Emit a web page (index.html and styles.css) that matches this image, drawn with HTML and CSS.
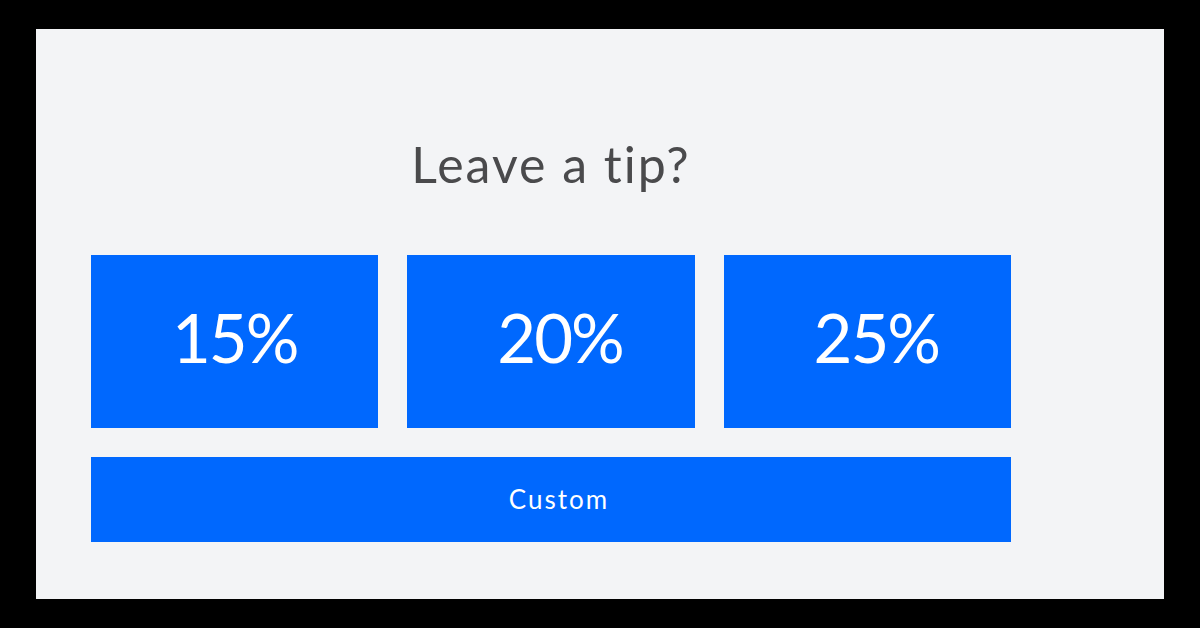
FILE: index.html
```html
<!DOCTYPE html>
<html lang="en">
<head>
    <meta charset="UTF-8">
    <meta name="viewport" content="width=device-width, initial-scale=1.0">
    <title>Leave a tip?</title>
    <link rel="stylesheet" href="styles.css">
</head>
<body>
    <div class="panel">
        <div class="tip">
            <h1 class="tip-title">Leave a tip?</h1>
            <div class="tip-options">
                <button class="tip-btn">15%</button>
                <button class="tip-btn tip-btn-offset">20%</button>
                <button class="tip-btn tip-btn-offset">25%</button>
            </div>
            <button class="tip-btn tip-custom">Custom</button>
        </div>
    </div>
</body>
</html>
```
FILE: styles.css
```css
html, body{
    margin: 0;
    background: #000;
}

body{
    padding: 29px 36px;
    font-family: Lato, "Open Sans", sans-serif;
}

.panel{
    background: #f3f4f6;
    height: 570px;
    padding: 105px 153px 0 55px;
    box-sizing: border-box;
}

.tip-title{
    margin: 0 0 61px;
    font-size: 50px;
    line-height: 60px;
    font-weight: 400;
    letter-spacing: 2px;
    color: #4a4a4c;
    text-align: center;
}

.tip-options{
    display: grid;
    grid-template-columns: repeat(3, 1fr);
    gap: 29px;
    margin-bottom: 29px;
}

.tip-btn{
    display: flex;
    align-items: center;
    justify-content: center;
    height: 173px;
    border: 0;
    padding: 0 0 10px;
    background: #0068fe;
    color: #fff;
    font-family: inherit;
    font-size: 67px;
    font-weight: 400;
    letter-spacing: -2px;
}

.tip-btn-offset{
    padding-left: 18px;
}

.tip-custom{
    width: 100%;
    height: 85px;
    padding: 0 0 2px 16px;
    font-size: 26px;
    letter-spacing: 2px;
}
```
